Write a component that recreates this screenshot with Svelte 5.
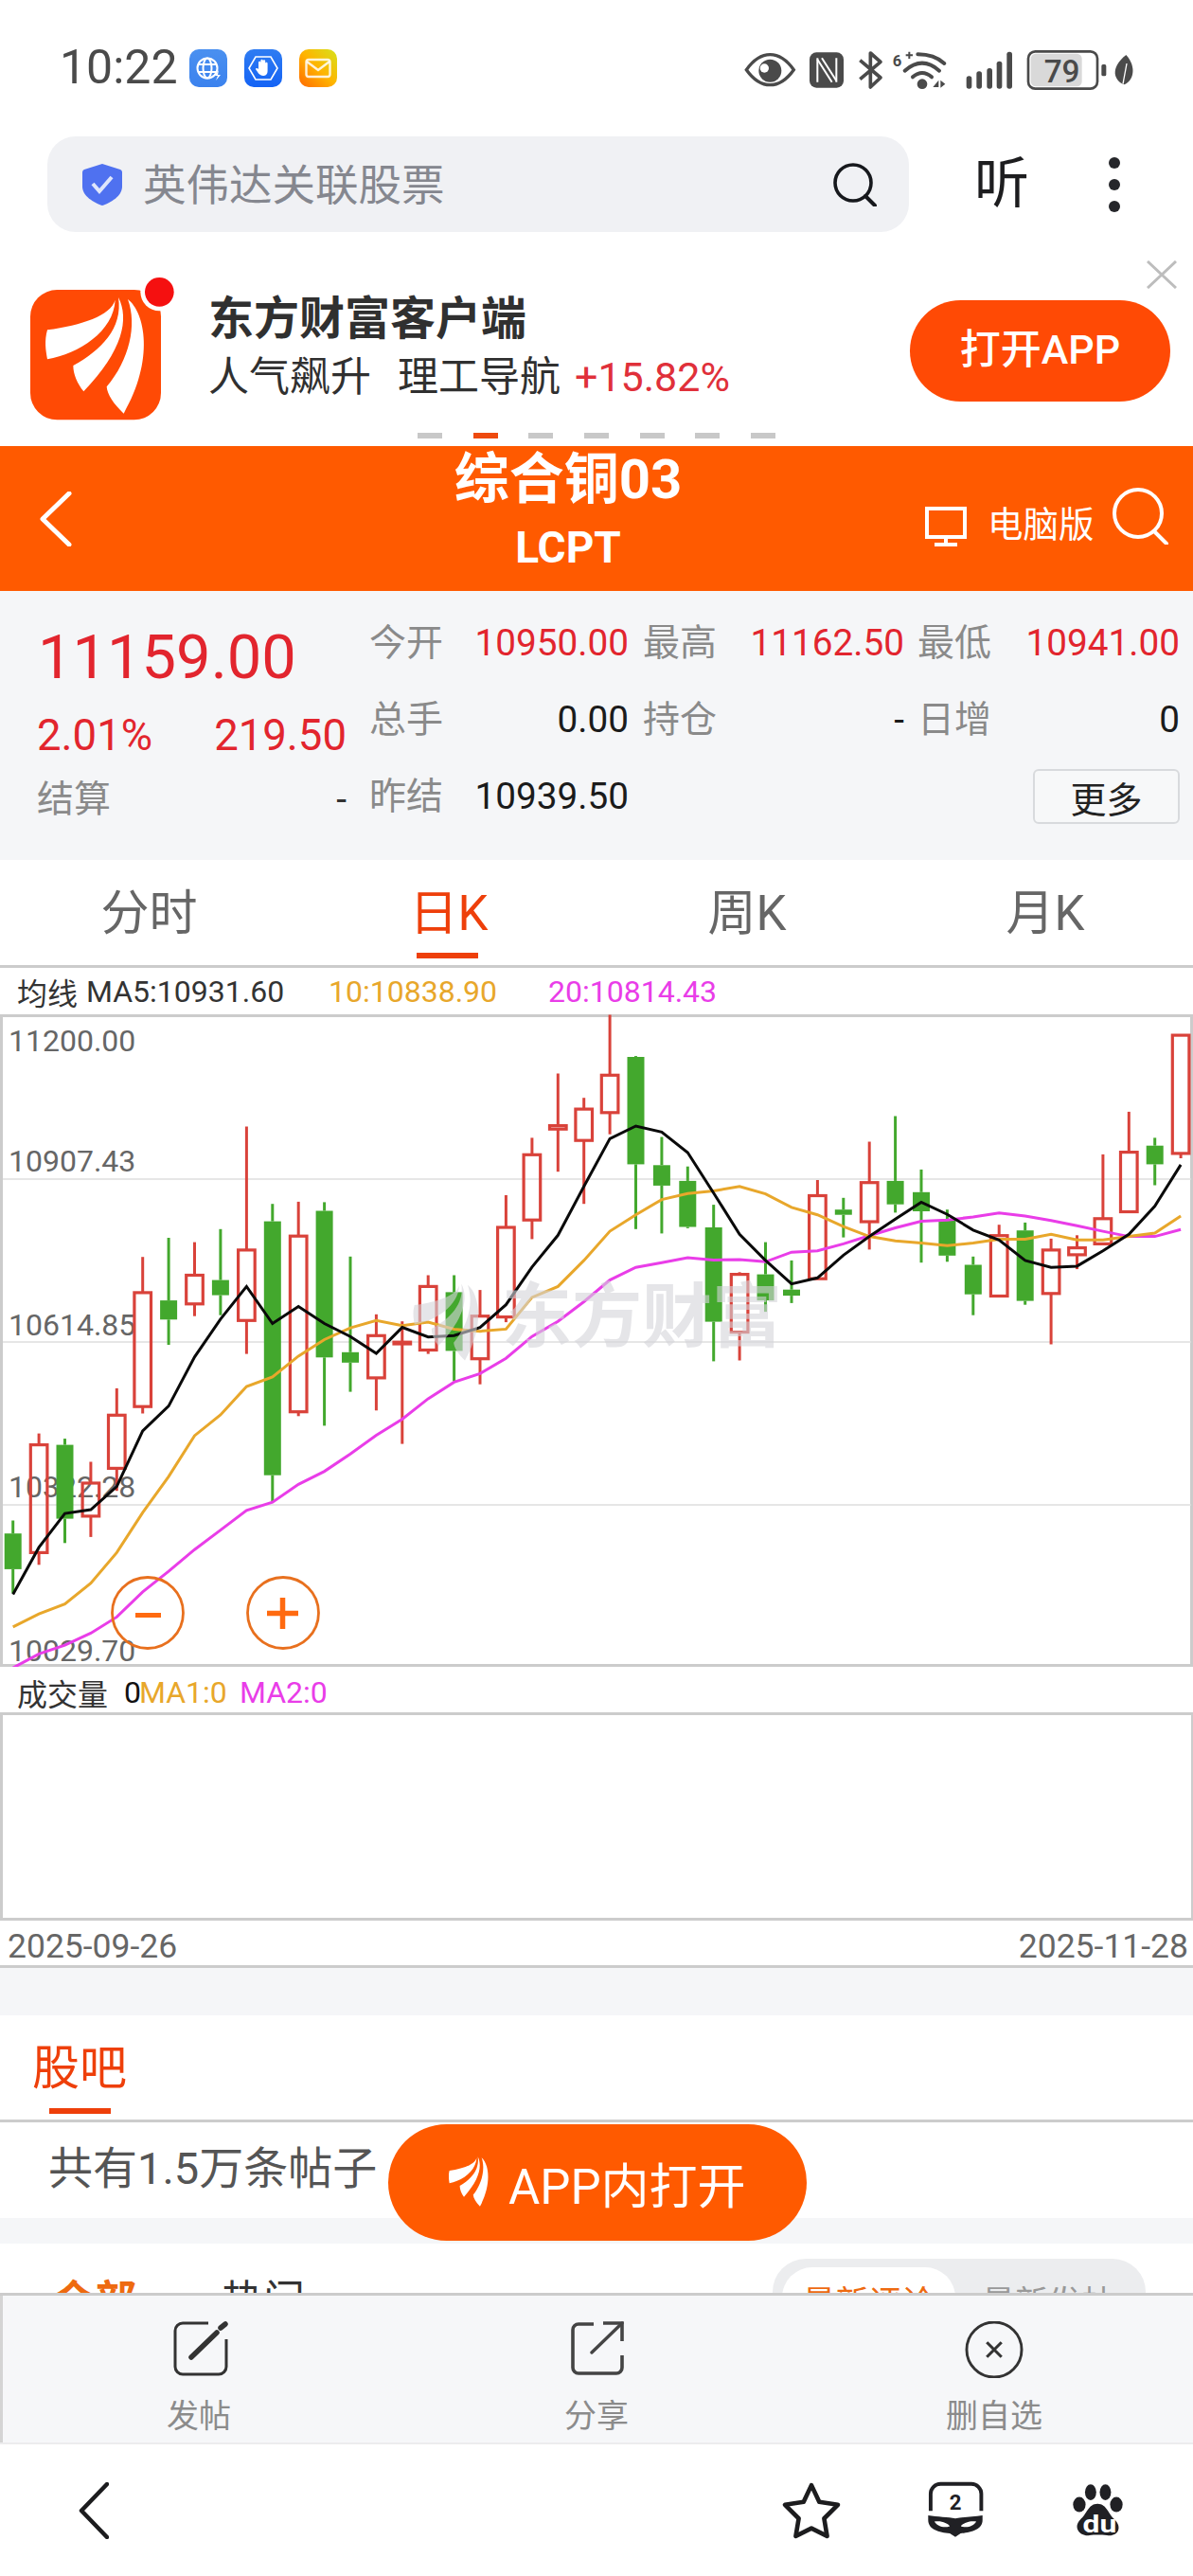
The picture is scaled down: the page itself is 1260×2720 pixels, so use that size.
<script>
	// values read as y positions off the chart, see toY
	const candles = [
		['g', 1188, 1218, 1300, 1355], ['r', 988, 1014, 1262, 1290], ['g', 1000, 1014, 1184, 1240],
		['r', 1053, 1102, 1178, 1226], ['r', 884, 946, 1068, 1120], ['r', 582, 664, 926, 942],
		['g', 538, 682, 726, 784], ['r', 548, 624, 690, 718], ['g', 518, 635, 670, 716],
		['r', 282, 566, 728, 805], ['g', 460, 500, 1084, 1145], ['r', 455, 534, 938, 948],
		['g', 456, 476, 813, 970], ['g', 581, 801, 825, 892], ['r', 714, 763, 860, 935],
		['r', 730, 778, 782, 1012], ['r', 624, 650, 796, 805], ['g', 624, 663, 798, 868],
		['r', 658, 718, 816, 875], ['r', 440, 514, 720, 732], ['r', 308, 347, 497, 541],
		['r', 160, 280, 288, 386], ['r', 216, 242, 314, 460], ['r', 25, 164, 250, 300],
		['g', 120, 122, 369, 518], ['g', 306, 371, 418, 528], ['g', 374, 407, 513, 516],
		['g', 462, 514, 731, 822], ['r', 617, 622, 755, 820], ['g', 548, 622, 682, 708],
		['g', 590, 657, 671, 688], ['r', 405, 441, 632, 632], ['g', 446, 473, 485, 537],
		['r', 317, 411, 501, 565], ['g', 258, 407, 461, 480], ['g', 381, 433, 477, 595],
		['g', 473, 497, 579, 593], ['g', 581, 600, 668, 716], ['r', 508, 533, 672, 672],
		['g', 503, 521, 683, 692], ['r', 540, 566, 666, 783], ['r', 532, 561, 577, 610],
		['r', 346, 494, 552, 552], ['r', 248, 341, 478, 478], ['g', 308, 326, 369, 417],
		['r', 72, 72, 344, 355]
	];
	const ma5 = [1358, 1250, 1172, 1163, 1110, 982, 925, 812, 725, 650, 735, 696, 735, 765, 804, 744, 766, 763, 744, 692, 605, 532, 420, 310, 281, 295, 342, 435, 530, 590, 644, 630, 578, 535, 495, 456, 484, 520, 543, 590, 606, 603, 568, 530, 465, 370];
	const ma10 = [1433, 1403, 1380, 1332, 1262, 1170, 1087, 993, 945, 880, 858, 810, 772, 745, 728, 740, 732, 748, 753, 748, 675, 650, 590, 523, 485, 450, 436, 430, 420, 437, 468, 485, 512, 535, 545, 550, 556, 550, 541, 541, 530, 543, 543, 535, 527, 488];
	const ma20 = [1527, 1495, 1475, 1447, 1410, 1352, 1305, 1255, 1210, 1165, 1146, 1105, 1075, 1035, 992, 955, 908, 870, 850, 815, 765, 730, 685, 635, 606, 595, 584, 589, 588, 593, 571, 568, 552, 533, 515, 500, 497, 490, 481, 488, 498, 510, 523, 535, 535, 519];

	const toY = (v) => +(v / 2.178 - 11).toFixed(1);
	const toX = (i) => +(13.66 + i * 27.41).toFixed(1);
	const line = (arr) => arr.map((v, i) => toX(i) + ',' + toY(v)).join(' ');

	const axis = [
		{ t: '11200.00', y: 39 },
		{ t: '10907.43', y: 166 },
		{ t: '10614.85', y: 339 },
		{ t: '10322.28', y: 510 },
		{ t: '10029.70', y: 683 }
	];
	const grid = [174, 346, 518];

	const rows = [
		[['今开'], ['10950.00', 'up'], ['最高'], ['11162.50', 'up'], ['最低'], ['10941.00', 'up']],
		[['总手'], ['0.00', 'flat'], ['持仓'], ['-', 'flat'], ['日增'], ['0', 'flat']]
	];
	const tabs = ['分时', '日K', '周K', '月K'];
	const pager = [0, 1, 2, 3, 4, 5, 6];
</script>

{#snippet feathers()}
	<path d="M305,110C290,160 200,190 90,205C80,240 85,270 90,298C190,280 300,210 305,110Z" />
	<path d="M315,102C350,170 330,270 205,400C185,375 172,345 172,318C260,270 330,200 315,102Z" />
	<path d="M345,108C400,150 430,300 332,470C300,440 280,410 278,385C350,300 375,190 345,108Z" />
{/snippet}

<div class="page">
	<div class="status">
		<span class="clock">10:22</span>
		<svg class="app" viewBox="0 0 40 40">
			<defs>
				<linearGradient id="ga" x1="0" y1="0" x2="0" y2="1"><stop offset="0" stop-color="#4a90f0" /><stop offset="1" stop-color="#3b82ee" /></linearGradient>
				<linearGradient id="gb" x1="0" y1="0" x2="0" y2="1"><stop offset="0" stop-color="#2f7cf2" /><stop offset="1" stop-color="#1463f5" /></linearGradient>
				<linearGradient id="gc" x1="1" y1="0" x2="0" y2="1"><stop offset="0" stop-color="#d6e21c" /><stop offset=".5" stop-color="#ffb400" /><stop offset="1" stop-color="#ff6a00" /></linearGradient>
			</defs>
			<rect width="40" height="40" rx="10" fill="url(#ga)" />
			<g fill="none" stroke="#fff" stroke-width="2">
				<circle cx="19" cy="20" r="10.5" />
				<ellipse cx="19" cy="20" rx="4.5" ry="10.5" />
				<path d="M9,16H29M9,24H29" />
			</g>
			<path d="M31,22L27,28H30L28,33L33,27H30Z" fill="#fff" />
		</svg>
		<svg class="app" viewBox="0 0 40 40">
			<rect width="40" height="40" rx="10" fill="url(#gb)" />
			<path d="M12,8H28L35,20L28,32H12L5,20Z" fill="none" stroke="#fff" stroke-width="1.6" />
			<path d="M15,19V14a1.2,1.2 0 0 1 2.4,0V12a1.2,1.2 0 0 1 2.4,0V12.5a1.2,1.2 0 0 1 2.4,0V15a1.2,1.2 0 0 1 2.4,0V23C24.6,27 22,28 20,28C16,28 14,24 12,21C12,19.5 14,19.5 15,21Z" fill="#fff" />
		</svg>
		<svg class="app" viewBox="0 0 40 40">
			<rect width="40" height="40" rx="10" fill="url(#gc)" />
			<rect x="7.5" y="11" width="25" height="18" rx="2.5" fill="none" stroke="#fff" stroke-width="2.4" opacity=".85" />
			<path d="M8,13L20,22L32,13" fill="none" stroke="#fff" stroke-width="2.4" opacity=".85" />
		</svg>
		<svg class="sys" viewBox="0 0 1290 180">
			<g fill="#4a4a4a">
				<path d="M25,95C50,60 75,47 100,47C125,47 150,60 175,95C150,130 125,143 100,143C75,143 50,130 25,95Z" fill="none" stroke="#4a4a4a" stroke-width="10" />
				<circle cx="100" cy="98" r="36" />
				<circle cx="82" cy="90" r="14" fill="#fff" />
				<rect x="225" y="40" width="108" height="112" rx="22" />
				<path d="M250,58V134M310,58V134" fill="none" stroke="#fff" stroke-width="6" />
				<path d="M250,62L296,134M264,58L310,130" fill="none" stroke="#fff" stroke-width="6" />
				<path d="M385,65L450,120L418,150V42L450,70L385,125" fill="none" stroke="#4a4a4a" stroke-width="11" stroke-linejoin="round" />
				<text x="488" y="84" class="sys-small">6</text>
				<path d="M530,46H538V38H544V46H552V52H544V60H538V52H530Z" />
				<g fill="none" stroke="#4a4a4a" stroke-width="12" stroke-linecap="round">
					<path d="M568,46Q620,46 652,75" />
					<path d="M527,98Q582,50 636,98" />
					<path d="M552,118Q582,92 612,118" />
				</g>
				<circle cx="582" cy="140" r="16" />
				<path d="M616,150L634,128V150ZM640,128V152L655,140Z" />
				<rect x="722" y="115" width="17" height="40" rx="8" />
				<rect x="754" y="100" width="17" height="55" rx="8" />
				<rect x="787" y="90" width="17" height="65" rx="8" />
				<rect x="818" y="68" width="17" height="87" rx="8" />
				<rect x="850" y="38" width="17" height="117" rx="8" />
				<rect x="926" y="44" width="162" height="104" rx="16" fill="#d9d9d9" />
				<rect x="918" y="37" width="219" height="118" rx="22" fill="none" stroke="#4a4a4a" stroke-width="8" />
				<text x="968" y="136" class="sys-batt">79</text>
				<rect x="1150" y="78" width="15" height="37" rx="5" />
				<path d="M1228,48C1262,85 1252,130 1222,142C1190,130 1175,90 1228,48Z" />
				<path d="M1230,75L1218,140" stroke="#fff" stroke-width="4" />
			</g>
		</svg>
	</div>

	<div class="search-row">
		<div class="search">
			<svg class="shield" viewBox="0 0 42 44">
				<path d="M21,0L40,6C42,7 42,8 42,10V24C42,34 30,41 21,44C12,41 0,34 0,24V10C0,8 0,7 2,6Z" fill="#4f71f0" />
				<path d="M11,21L18,29L31,14" fill="none" stroke="#dfe6fb" stroke-width="4" />
			</svg>
			<span class="query">英伟达关联股票</span>
			<svg class="lens" viewBox="0 0 46 46">
				<circle cx="21" cy="21" r="19" fill="none" stroke="#16181c" stroke-width="3.6" />
				<path d="M34,35L44,45" stroke="#16181c" stroke-width="4" stroke-linecap="round" />
			</svg>
		</div>
		<span class="listen">听</span>
		<div class="more-dots"><i></i><i></i><i></i></div>
	</div>

	<div class="ad">
		<button class="ad-close" aria-label="关闭">
			<svg viewBox="0 0 32 30" width="32" height="30"><path d="M1,1L31,29M31,1L1,29" stroke="#bdbdbd" stroke-width="3" /></svg>
		</button>
		<div class="ad-row">
			<svg class="ad-logo" viewBox="0 0 540 510">
				<rect x="36" y="78" width="414" height="412" rx="85" fill="#ff4a05" />
				<circle cx="445" cy="85" r="60" fill="#fff" />
				<circle cx="445" cy="85" r="46" fill="#f51010" />
				<g fill="#fff">{@render feathers()}</g>
			</svg>
			<div class="ad-text">
				<div class="ad-title">东方财富客户端</div>
				<div class="ad-sub"><span>人气飙升</span><span>理工导航</span><span class="ad-rate">+15.82%</span></div>
			</div>
			<div class="ad-open">打开APP</div>
		</div>
		<div class="pager">
			{#each pager as p}
				<i class:on={p === 1}></i>
			{/each}
		</div>
	</div>

	<header class="bar">
		<svg class="bar-back" viewBox="0 0 34 58"><path d="M31,2L3,29L31,56" fill="none" stroke="#fff" stroke-width="5" stroke-linecap="round" stroke-linejoin="round" /></svg>
		<div class="bar-title">
			<div class="name">综合铜03</div>
			<div class="code">LCPT</div>
		</div>
		<div class="bar-right">
			<svg class="monitor" viewBox="0 0 44 42">
				<rect x="2" y="2" width="40" height="30" fill="none" stroke="#fff" stroke-width="4" />
				<path d="M22,32V40M10,40H34" stroke="#fff" stroke-width="4" fill="none" />
			</svg>
			<span class="pc">电脑版</span>
			<svg class="bar-lens" viewBox="0 0 60 60">
				<circle cx="28" cy="27" r="25" fill="none" stroke="#fff" stroke-width="4" />
				<path d="M45,46L58,59" stroke="#fff" stroke-width="4" stroke-linecap="round" />
			</svg>
		</div>
	</header>

	<section class="quote">
		<div class="quote-left">
			<div class="price">11159.00</div>
			<div class="delta"><span>2.01%</span><span>219.50</span></div>
			<div class="settle"><span>结算</span><span class="dash">-</span></div>
		</div>
		<div class="quote-grid">
			{#each rows as row}
				{#each row as cell}
					{#if cell[1]}
						<span class="val {cell[1]}">{cell[0]}</span>
					{:else}
						<span class="lbl">{cell[0]}</span>
					{/if}
				{/each}
			{/each}
			<span class="lbl">昨结</span>
			<span class="val flat">10939.50</span>
			<button class="more">更多</button>
		</div>
	</section>

	<nav class="tabs">
		{#each tabs as t, i}
			<div class="tab" class:active={i === 1}>
				<span class="tab-text" class:shift={i > 0}>{t}</span>
				{#if i === 1}<div class="tab-line"></div>{/if}
			</div>
		{/each}
	</nav>

	<div class="ma-row">
		<span class="ma-name">均线</span>
		<span class="ma-5">MA5:10931.60</span>
		<span class="ma-10">10:10838.90</span>
		<span class="ma-20">20:10814.43</span>
	</div>

	<svg class="kline" viewBox="0 0 1260 689">
		<rect x="1.5" y="1.5" width="1257" height="686" fill="none" stroke="#cccccc" stroke-width="3" />
		{#each grid as g}
			<line x1="3" x2="1258" y1={g} y2={g} stroke="#dedede" stroke-width="1.5" />
		{/each}
		{#each axis as a}
			<text x="9" y={a.y} class="axis">{a.t}</text>
		{/each}
		{#each candles as c, i}
			{@const col = c[0] === 'r' ? '#d9423a' : '#43a82d'}
			<line x1={toX(i)} x2={toX(i)} y1={toY(c[1])} y2={toY(c[2])} stroke={col} stroke-width="3" />
			<line x1={toX(i)} x2={toX(i)} y1={toY(c[3])} y2={toY(c[4])} stroke={col} stroke-width="3" />
			{#if c[0] === 'r'}
				<rect x={toX(i) - 8.8} y={toY(c[2])} width="17.6" height={toY(c[3]) - toY(c[2])} fill="none" stroke={col} stroke-width="3.2" />
			{:else}
				<rect x={toX(i) - 9} y={toY(c[2])} width="18" height={toY(c[3]) - toY(c[2])} fill={col} />
			{/if}
		{/each}
		<polyline points={line(ma20)} fill="none" stroke="#e93de8" stroke-width="3" />
		<polyline points={line(ma10)} fill="none" stroke="#e8a72b" stroke-width="3" />
		<polyline points={line(ma5)} fill="none" stroke="#0a0a0a" stroke-width="3" />

		<circle cx="156" cy="632" r="37.5" fill="none" stroke="#e8701e" stroke-width="2.8" />
		<rect x="143" y="632" width="27" height="5" fill="#ff6a10" />
		<circle cx="299" cy="632" r="37.5" fill="none" stroke="#e8701e" stroke-width="2.8" />
		<path d="M282,632.5H315M298.5,616V649" stroke="#ff6a10" stroke-width="5.5" />

		<g opacity=".6">
			<g fill="#d4d4da" transform="translate(418 262) scale(.22)">{@render feathers()}</g>
			<text x="530" y="345" class="mark">东方财富</text>
		</g>
	</svg>

	<div class="vol-row">
		<span class="vol-name">成交量</span>
		<span class="vol-0">0</span>
		<span class="ma-10">MA1:0</span>
		<span class="vol-2">MA2:0</span>
	</div>
	<div class="vol-box"></div>
	<div class="dates"><span>2025-09-26</span><span>2025-11-28</span></div>
	<div class="band tall"></div>

	<section class="guba">
		<div class="guba-name">股吧<div class="guba-line"></div></div>
	</section>
	<div class="count">共有1.5万条帖子</div>
	<div class="band"></div>
	<div class="posts">
		<span class="post-tab on">全部</span>
		<span class="post-tab">热门</span>
		<div class="sort">
			<span class="sort-item on">最新评论</span>
			<span class="sort-item">最新发帖</span>
		</div>
	</div>

	<div class="toolbar">
		<div class="tool">
			<svg viewBox="0 0 58 60" class="tool-icon">
				<path d="M37,2H10a8,8 0 0 0 -8,8V48a8,8 0 0 0 8,8H48a8,8 0 0 0 8,-8V19" fill="none" stroke="#333" stroke-width="3" />
				<path d="M19,38L46,12" stroke="#333" stroke-width="5.5" stroke-linecap="round" />
				<path d="M50,7L55,3" stroke="#333" stroke-width="5.5" stroke-linecap="round" />
			</svg>
			<span>发帖</span>
		</div>
		<div class="tool">
			<svg viewBox="0 0 58 60" class="tool-icon">
				<path d="M24,3H8a6,6 0 0 0 -6,6V49a6,6 0 0 0 6,6H48a6,6 0 0 0 6,-6V36" fill="none" stroke="#444" stroke-width="3.6" />
				<path d="M22,33L54,2" stroke="#444" stroke-width="3.4" stroke-linecap="round" />
				<path d="M34,2H54V21" fill="none" stroke="#444" stroke-width="3.6" />
			</svg>
			<span>分享</span>
		</div>
		<div class="tool">
			<svg viewBox="0 0 64 62" class="tool-icon wide">
				<circle cx="32" cy="31" r="30" fill="none" stroke="#333" stroke-width="3" />
				<path d="M24,23L40,39M40,23L24,39" stroke="#333" stroke-width="3.2" />
			</svg>
			<span>删自选</span>
		</div>
	</div>

	<div class="nav">
		<svg class="nav-back" viewBox="0 0 32 60"><path d="M30,2L3,30L30,58" fill="none" stroke="#1c1c1e" stroke-width="4.5" stroke-linecap="round" stroke-linejoin="round" /></svg>
		<svg class="nav-star" viewBox="0 0 60 58">
			<path d="M30,3L38,20L57,23L43,37L46,55L30,47L14,55L17,37L3,23L22,20Z" fill="none" stroke="#1c1c1e" stroke-width="4.5" stroke-linejoin="round" />
		</svg>
		<svg class="nav-tabs" viewBox="56 60 184 186">
			<path d="M68,155V100a32,32 0 0 1 32,-32H200a32,32 0 0 1 32,32V155" fill="none" stroke="#202024" stroke-width="12" />
			<text x="148" y="152" class="tabs-n">2</text>
			<path d="M60,170C90,175 125,175 148,180C175,175 205,175 236,170V185C236,215 200,225 165,228L148,240L130,228C95,225 60,215 60,185Z" fill="#202024" />
			<path d="M80,190C100,185 125,195 130,205C110,212 90,205 80,190ZM216,190C196,185 171,195 166,205C186,212 206,205 216,190Z" fill="#fff" />
		</svg>
		<svg class="nav-paw" viewBox="518 64 166 172">
			<g fill="#202024">
				<ellipse cx="542" cy="132" rx="20" ry="24" />
				<ellipse cx="578" cy="93" rx="18" ry="25" />
				<ellipse cx="625" cy="93" rx="18" ry="25" />
				<ellipse cx="660" cy="132" rx="20" ry="24" />
				<path d="M600,130C570,130 565,165 545,180C520,205 545,235 575,230C590,228 610,228 630,230C665,235 680,205 655,180C635,165 630,130 600,130Z" />
			</g>
			<text x="553" y="220" class="paw-du" textLength="108" lengthAdjust="spacingAndGlyphs">du</text>
		</svg>
	</div>

	<div class="float-open">
		<svg class="float-logo" viewBox="85 100 330 372" preserveAspectRatio="none"><g fill="#fff">{@render feathers()}</g></svg>
		<span>APP内打开</span>
	</div>
</div>

<style>
	:global(body) {
		margin: 0;
		background: #fff;
	}

	.page {
		position: relative;
		width: 1260px;
		height: 2720px;
		overflow: hidden;
		background: #fff;
		font-family: Roboto, "Noto Sans CJK SC", sans-serif;
		color: #222;
	}

	svg {
		display: block;
		flex-shrink: 0;
	}

	/* status bar */
	.status {
		display: flex;
		align-items: center;
		height: 144px;
		padding: 0 0 0 63px;
		box-sizing: border-box;
	}

	.clock {
		width: 137px;
		margin-top: -2px;
		font-size: 50px;
		line-height: 144px;
		height: 144px;
		color: #4a4a4a;
	}

	.app {
		width: 40px;
		height: 40px;
		margin-right: 18px;
		margin-top: -1px;
	}

	.sys {
		width: 430px;
		height: 60px;
		margin-left: 406px;
		margin-top: -1px;
	}

	.sys-small {
		font: 700 50px Roboto, sans-serif;
	}

	.sys-batt {
		font: 500 100px Roboto, sans-serif;
	}

	/* search */
	.search-row {
		display: flex;
		align-items: center;
		height: 101px;
		padding-left: 50px;
	}

	.search {
		display: flex;
		align-items: center;
		width: 910px;
		height: 101px;
		border-radius: 30px;
		background: #f0f1f4;
		box-sizing: border-box;
		padding: 0 34px 0 37px;
	}

	.shield {
		width: 42px;
		height: 44px;
		margin-top: 1px;
	}

	.query {
		flex: 1;
		margin-left: 22px;
		margin-top: -5px;
		font-size: 45.5px;
		color: #85878f;
	}

	.lens {
		width: 46px;
		height: 46px;
	}

	.listen {
		margin-left: 69px;
		margin-top: -2px;
		font-size: 58px;
		line-height: 60px;
		color: #1d1d1f;
	}

	.more-dots {
		display: flex;
		flex-direction: column;
		gap: 11px;
		margin-left: 84px;
	}

	.more-dots i {
		width: 12px;
		height: 12px;
		border-radius: 50%;
		background: #26272b;
	}

	/* ad */
	.ad {
		position: relative;
		height: 226px;
		padding-top: 35px;
		box-sizing: border-box;
	}

	.ad-close {
		position: absolute;
		left: 1211px;
		top: 30px;
		padding: 0;
		border: 0;
		background: none;
	}

	.ad-row {
		display: flex;
		padding-left: 20px;
		height: 170px;
	}

	.ad-logo {
		width: 180px;
		height: 170px;
	}

	.ad-text {
		margin-left: 20px;
		padding-top: 30px;
		width: 741px;
	}

	.ad-title {
		font-size: 48px;
		line-height: 54px;
		font-weight: 700;
		color: #303030;
	}

	.ad-sub {
		display: flex;
		margin-top: 10px;
		font-size: 43px;
		line-height: 48px;
		color: #303030;
	}

	.ad-sub span + span {
		margin-left: 28px;
	}

	.ad-sub .ad-rate {
		margin-left: 15px;
		color: #e0303a;
	}

	.ad-open {
		width: 275px;
		height: 107px;
		margin-top: 37px;
		border-radius: 54px;
		background: #ff4a05;
		color: #fff;
		font-size: 43px;
		font-weight: 500;
		line-height: 104px;
		text-align: center;
	}

	.pager {
		display: flex;
		justify-content: center;
		gap: 32.6px;
		margin-top: 7px;
	}

	.pager i {
		width: 26px;
		height: 6px;
		background: #c8c8c8;
	}

	.pager i.on {
		background: #ee4a0e;
	}

	/* orange bar */
	.bar {
		display: grid;
		grid-template-columns: 300px 600px 360px;
		height: 153px;
		background: #ff5a00;
		color: #fff;
	}

	.bar-back {
		width: 34px;
		height: 58px;
		margin: 48px 0 0 42px;
	}

	.bar-title {
		padding-top: 4px;
		text-align: center;
		font-weight: 700;
	}

	.name {
		font-size: 58px;
		line-height: 62px;
	}

	.code {
		margin-top: 16px;
		font-size: 46px;
		line-height: 50px;
	}

	.bar-right {
		display: flex;
		align-items: flex-start;
		padding-top: 44px;
	}

	.monitor {
		width: 44px;
		height: 42px;
		margin: 20px 0 0 77px;
	}

	.pc {
		margin: 16px 0 0 22px;
		font-size: 37.5px;
		line-height: 46px;
	}

	.bar-lens {
		width: 60px;
		height: 60px;
		margin-left: 18px;
	}

	/* quote */
	.quote {
		display: flex;
		height: 284px;
		padding-left: 39px;
		box-sizing: border-box;
		background: #f5f6f8;
	}

	.quote-left {
		width: 327px;
		margin-right: 24px;
	}

	.price {
		margin-top: 38px;
		margin-left: 1px;
		font-size: 65px;
		line-height: 64px;
		color: #e2252e;
	}

	.delta {
		display: flex;
		justify-content: space-between;
		margin-top: 26px;
		font-size: 45.5px;
		line-height: 50px;
		color: #e2252e;
	}

	.settle {
		display: flex;
		justify-content: space-between;
		margin-top: 19px;
		font-size: 39px;
		line-height: 46px;
		color: #8a8a8a;
	}

	.dash {
		color: #333;
	}

	.quote-grid {
		display: grid;
		grid-template-columns: 76px 198px 93px 198px 92px 199px;
		grid-auto-rows: 81px;
		align-items: center;
		padding-top: 14px;
		height: fit-content;
	}

	.lbl {
		font-size: 39px;
		line-height: 46px;
		color: #8a8a8a;
		text-align: right;
		white-space: nowrap;
	}

	.val {
		font-size: 38.7px;
		line-height: 46px;
		text-align: right;
	}

	.val.up {
		color: #e2252e;
	}

	.val.flat {
		color: #1b1b1b;
	}

	.more {
		grid-column: 5 / 7;
		justify-self: end;
		width: 155px;
		height: 58px;
		padding: 0;
		border: 2px solid #d8dadd;
		border-radius: 6px;
		background: #f7f8f9;
		font: 38px "Noto Sans CJK SC", sans-serif;
		color: #222;
	}

	/* period tabs */
	.tabs {
		display: grid;
		grid-template-columns: repeat(4, 315px);
		height: 114px;
		box-sizing: border-box;
		border-bottom: 3px solid #cccccc;
	}

	.tab {
		padding-top: 32px;
		font-size: 51px;
		line-height: 50px;
		text-align: center;
		color: #666;
	}

	.tab-text {
		display: block;
	}

	.tab-text.shift {
		padding-left: 3px;
	}

	.tab.active {
		color: #ee3f0a;
	}

	.tab-line {
		width: 65px;
		height: 6px;
		margin: 16px auto 0;
		background: #ee3f0a;
	}

	.ma-row {
		display: flex;
		align-items: center;
		height: 49px;
		padding: 1px 0 0 18px;
		box-sizing: border-box;
		font-size: 32px;
		color: #333;
	}

	.ma-name {
		width: 73px;
	}

	.ma-5 {
		width: 256px;
	}

	.ma-10 {
		color: #e8a72b;
	}

	.ma-row .ma-10 {
		width: 232px;
	}

	.ma-20 {
		color: #e93de8;
	}

	.kline {
		width: 1260px;
		height: 689px;
	}

	.axis {
		font: 32px Roboto, sans-serif;
		fill: #666;
	}

	.mark {
		font: 700 74px "Noto Sans CJK SC", sans-serif;
		fill: #d4d4da;
	}

	/* volume */
	.vol-row {
		display: flex;
		align-items: center;
		height: 48px;
		padding: 5px 0 0 18px;
		box-sizing: border-box;
		font-size: 32px;
		color: #333;
	}

	.vol-name {
		width: 113px;
	}

	.vol-0 {
		width: 16px;
		color: #111;
	}

	.vol-row .ma-10 {
		width: 106px;
	}

	.vol-2 {
		color: #e93de8;
	}

	.vol-box {
		height: 220px;
		box-sizing: border-box;
		border: 3.5px solid #cccccc;
		border-right-width: 2px;
	}

	.dates {
		display: flex;
		justify-content: space-between;
		align-items: center;
		height: 50px;
		padding: 7px 5px 0 8px;
		box-sizing: border-box;
		border-bottom: 3px solid #cccccc;
		font-size: 35.5px;
		color: #666;
	}

	.band {
		height: 27px;
		background: #f5f6f8;
	}

	.band.tall {
		height: 50px;
	}

	/* guba */
	.guba {
		height: 113px;
		box-sizing: border-box;
		padding: 31px 0 0 34px;
		border-bottom: 3px solid #cccccc;
	}

	.guba-name {
		width: 100px;
		font-size: 50px;
		line-height: 50px;
		color: #ee3f0a;
	}

	.guba-line {
		width: 65px;
		height: 6px;
		margin: 17px auto 0;
		background: #ee3f0a;
	}

	.count {
		height: 101px;
		box-sizing: border-box;
		padding: 24px 0 0 51px;
		font-size: 47px;
		line-height: 50px;
		color: #555;
	}

	.posts {
		display: flex;
		align-items: flex-start;
		height: 52px;
		overflow: hidden;
		padding-left: 56px;
		box-sizing: border-box;
	}

	.post-tab {
		width: 178px;
		margin-top: 36px;
		font-size: 44px;
		line-height: 50px;
		color: #333;
	}

	.post-tab.on {
		color: #ee6a10;
		font-weight: 700;
	}

	.sort {
		display: flex;
		flex-shrink: 0;
		width: 394px;
		height: 70px;
		margin: 16px 0 0 404px;
		padding: 9px 0 0 10px;
		box-sizing: border-box;
		border-radius: 36px;
		background: #ecedef;
	}

	.sort-item {
		margin-left: 28px;
		padding-top: 18px;
		font-size: 35px;
		line-height: 42px;
		color: #999;
	}

	.sort-item.on {
		width: 183px;
		margin-left: 0;
		border-radius: 32px 32px 0 0;
		background: #fff;
		color: #ee6a10;
		text-align: center;
	}

	/* bottom tool bar */
	.toolbar {
		display: grid;
		grid-template-columns: repeat(3, 420px);
		height: 160px;
		box-sizing: border-box;
		border-top: 3px solid #cccccc;
		border-bottom: 2px solid #ececee;
		background: #f6f7f9;
		box-shadow: inset 3px 0 0 #d4d4d4;
	}

	.tool {
		display: flex;
		flex-direction: column;
		align-items: center;
		padding-top: 27px;
		font-size: 34px;
		line-height: 40px;
		color: #8b8b8b;
	}

	.tool-icon {
		width: 58px;
		height: 60px;
		margin-bottom: 20px;
		margin-left: 3px;
	}

	.tool-icon.wide {
		width: 64px;
		margin-left: 0;
	}

	.nav {
		display: flex;
		align-items: center;
		height: 139px;
		padding: 0 73px 0 83px;
		box-sizing: border-box;
	}

	.nav-back {
		width: 32px;
		height: 60px;
		margin-right: auto;
		margin-top: 1px;
	}

	.nav-star {
		width: 62px;
		height: 60px;
		margin-right: 91px;
	}

	.nav-tabs {
		width: 60px;
		height: 61px;
		margin-right: 93px;
	}

	.nav-paw {
		width: 55px;
		height: 57px;
	}

	.tabs-n {
		font: 700 68px Roboto, sans-serif;
		fill: #202024;
		text-anchor: middle;
	}

	.paw-du {
		font: 700 78px Roboto, sans-serif;
		fill: #fff;
	}

	/* floating button over the page */
	.float-open {
		position: absolute;
		left: 410px;
		top: 2243px;
		display: flex;
		align-items: center;
		width: 442px;
		height: 123px;
		padding-left: 64px;
		box-sizing: border-box;
		border-radius: 62px;
		background: #ff5a00;
		color: #fff;
		font-size: 51px;
	}

	.float-logo {
		width: 44px;
		height: 53px;
		margin-right: 19px;
		margin-top: -2px;
	}
</style>
